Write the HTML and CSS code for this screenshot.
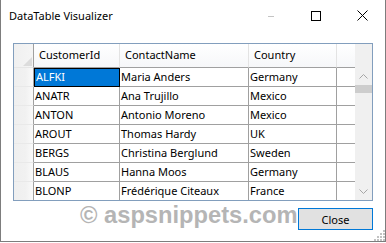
FILE: index.html
```html
<!DOCTYPE html>
<html>
<head>
<meta charset="utf-8">
<link rel="stylesheet" href="styles.css">
</head>
<body>
<div class="window">
  <div class="titlebar">
    <span class="title">DataTable Visualizer</span>
    <div class="controls">
      <span class="ctl"><svg width="10" height="10" viewBox="0 0 10 10"><line x1="3" y1="5.5" x2="9" y2="5.5" stroke="#c4c4c4" stroke-width="1"/></svg></span>
      <span class="ctl"><svg width="10" height="10" viewBox="0 0 10 10"><rect x="0.5" y="0.5" width="9" height="9" fill="none" stroke="#000" stroke-width="1"/></svg></span>
      <span class="ctl"><svg width="11" height="11" viewBox="0 0 11 11"><path d="M0.5 0.5 L10.5 10.5 M10.5 0.5 L0.5 10.5" stroke="#000" stroke-width="1"/></svg></span>
    </div>
  </div>
  <div class="content">
    <div class="grid">
      <div class="table">
        <div class="hd corner"><svg width="9" height="9" viewBox="0 0 9 9"><path d="M9 0 L9 9 L0 9 Z" fill="#dcdcdc"/></svg></div>
        <div class="hd">CustomerId</div>
        <div class="hd">ContactName</div>
        <div class="hd">Country</div>
        <div class="hd filler"></div>

        <div class="rh"></div><div class="c sel">ALFKI</div><div class="c">Maria Anders</div><div class="c">Germany</div><div class="c f"></div>
        <div class="rh"></div><div class="c">ANATR</div><div class="c">Ana Trujillo</div><div class="c">Mexico</div><div class="c f"></div>
        <div class="rh"></div><div class="c">ANTON</div><div class="c">Antonio Moreno</div><div class="c">Mexico</div><div class="c f"></div>
        <div class="rh"></div><div class="c">AROUT</div><div class="c">Thomas Hardy</div><div class="c">UK</div><div class="c f"></div>
        <div class="rh"></div><div class="c">BERGS</div><div class="c">Christina Berglund</div><div class="c">Sweden</div><div class="c f"></div>
        <div class="rh"></div><div class="c">BLAUS</div><div class="c">Hanna Moos</div><div class="c">Germany</div><div class="c f"></div>
        <div class="rh last"></div><div class="c last">BLONP</div><div class="c last">Frédérique Citeaux</div><div class="c last">France</div><div class="c f last"></div>
      </div>
      <div class="scrollbar">
        <div class="sb-top"></div>
        <div class="sb-btn"><svg width="9" height="5" viewBox="0 0 9 5"><path d="M0.5 4.5 L4.5 0.5 L8.5 4.5" fill="none" stroke="#a6a6a6" stroke-width="1"/></svg></div>
        <div class="thumb"></div>
        <div class="track"></div>
        <div class="sb-btn"><svg width="9" height="5" viewBox="0 0 9 5"><path d="M0.5 0.5 L4.5 4.5 L8.5 0.5" fill="none" stroke="#a6a6a6" stroke-width="1"/></svg></div>
      </div>
    </div>
    <div class="footer">
      <span class="watermark">© aspsnippets.com</span>
      <button class="close">Close</button>
    </div>
  </div>
  <svg class="grip" width="11" height="11" viewBox="0 0 11 11">
    <rect x="9" y="0" width="2" height="2" fill="#c2c2c2"/>
    <rect x="6" y="3" width="2" height="2" fill="#c2c2c2"/><rect x="9" y="3" width="2" height="2" fill="#c2c2c2"/>
    <rect x="3" y="6" width="2" height="2" fill="#c2c2c2"/><rect x="6" y="6" width="2" height="2" fill="#c2c2c2"/><rect x="9" y="6" width="2" height="2" fill="#c2c2c2"/>
    <rect x="0" y="9" width="2" height="2" fill="#c2c2c2"/><rect x="3" y="9" width="2" height="2" fill="#c2c2c2"/><rect x="6" y="9" width="2" height="2" fill="#c2c2c2"/><rect x="9" y="9" width="2" height="2" fill="#c2c2c2"/>
  </svg>
</div>
</body>
</html>
```

FILE: styles.css
```css
html, body {
  margin: 0;
  padding: 0;
  background: #fff;
}
body {
  font-family: "Segoe UI", "Noto Sans", sans-serif;
  font-size: 11px;
  color: #000;
}
.window {
  position: relative;
  box-sizing: border-box;
  width: 386px;
  height: 242px;
  border: 1px solid #7d7d7d;
  border-top: none;
  background: #fff;
}
.titlebar {
  display: flex;
  align-items: center;
  height: 31px;
}
.title {
  padding-left: 8px;
  font-size: 11px;
  flex: 1;
  margin-top: -1px;
}
.controls {
  display: flex;
  align-self: stretch;
}
.ctl {
  width: 46px;
  display: flex;
  align-items: center;
  justify-content: center;
}
.content {
  padding: 12px 12px 0 12px;
}
.grid {
  display: flex;
  width: 360px;
  height: 158px;
  box-sizing: border-box;
  border: 1px solid #829ebd;
}
.table {
  display: grid;
  grid-template-columns: 20px 86px 129px 88px 18px;
  grid-template-rows: 24px repeat(6, 19px) 18px;
}
.hd {
  box-sizing: border-box;
  background: linear-gradient(#ffffff, #f6f7f9);
  border-right: 1px solid #e3e3e3;
  border-bottom: 1px solid #a0a0a0;
  padding-left: 5px;
  line-height: 22px;
  white-space: nowrap;
  overflow: hidden;
}
.hd.corner {
  background: linear-gradient(to right, #f0f0f0, #f5f5f5);
  border-right: 1px solid #a0a0a0;
  border-bottom: 1px solid #e6e6e6;
  display: flex;
  align-items: flex-end;
  justify-content: flex-end;
  padding: 0 1px 1px 0;
}
.hd.filler {
  border-right: none;
  padding: 0;
}
.rh {
  box-sizing: border-box;
  background: linear-gradient(to right, #efefef, #f1f1f1 60%, #fafafa);
  border-right: 1px solid #a0a0a0;
  border-bottom: 1px solid #e9e9e9;
}
.c {
  box-sizing: border-box;
  border-right: 1px solid #a0a0a0;
  border-bottom: 1px solid #a0a0a0;
  padding-left: 1px;
  line-height: 18px;
  white-space: nowrap;
  overflow: hidden;
}
.c.f {
  border-right: none;
  padding: 0;
}
.last {
  border-bottom: none;
}
.c.sel {
  background: #0078d7;
  color: #fff;
  outline: 1px solid #000;
  outline-offset: -1px;
  padding-left: 2px;
}
.scrollbar {
  width: 17px;
  background: #f0f0f0;
  display: flex;
  flex-direction: column;
}
.sb-top {
  height: 24px;
}
.sb-btn {
  height: 17px;
  display: flex;
  align-items: center;
  justify-content: center;
}
.thumb {
  height: 8px;
  background: #cdcdcd;
}
.track {
  flex: 1;
}
.footer {
  position: relative;
  display: flex;
  justify-content: flex-end;
  margin-top: 7px;
}
.watermark {
  position: absolute;
  left: 67px;
  top: -5px;
  font-family: "Liberation Sans", Arial, sans-serif;
  font-weight: bold;
  font-size: 23.7px;
  line-height: 24px;
  color: #b5b5b5;
  white-space: nowrap;
}
.close {
  position: relative;
  width: 75px;
  height: 22px;
  margin: 0;
  padding: 0;
  border: 1px solid #0078d7;
  background: #e1e1e1;
  font-family: "Segoe UI", "Noto Sans", sans-serif;
  font-size: 11px;
  color: #000;
}
.grip {
  position: absolute;
  right: 0;
  bottom: 0;
}
```
